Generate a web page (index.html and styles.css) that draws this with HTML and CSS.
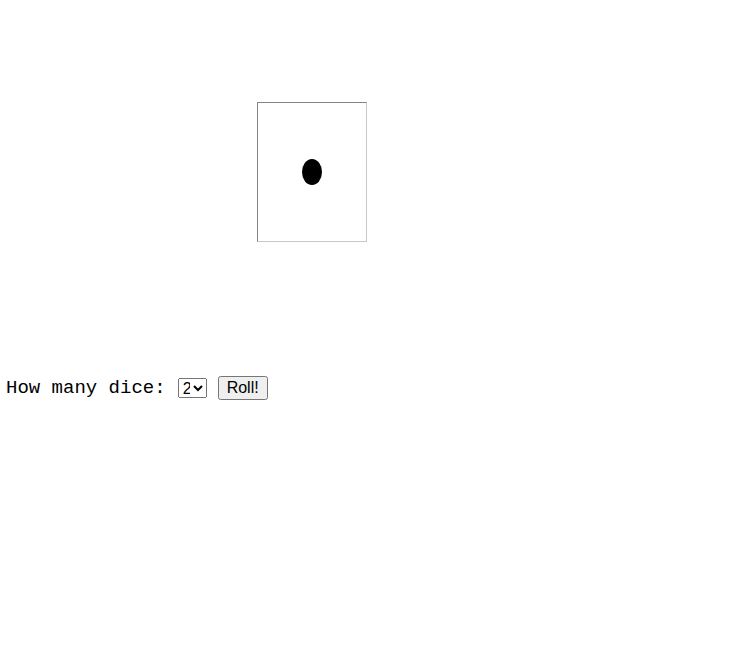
FILE: index.html
```html
<!DOCTYPE html>
<html>
<head>
<meta charset="utf-8">
<link rel="stylesheet" href="styles.css">
</head>
<body>
<div class="board">
  <div class="die">
    <span class="pip"></span>
  </div>
</div>
<form class="controls">
  <label class="label" for="count">How many dice:</label>
  <select id="count" class="select">
    <option>1</option>
    <option selected>2</option>
    <option>3</option>
  </select>
  <button type="button" class="roll">Roll!</button>
</form>
</body>
</html>
```

FILE: styles.css
```css
html, body {
  margin: 0;
  padding: 0;
  background: #fff;
}
.board {
  height: 376px;
  padding: 102px 0 0 257px;
  box-sizing: border-box;
}
.die {
  width: 110px;
  height: 140px;
  box-sizing: border-box;
  border: 1px solid;
  border-color: #858585 #c8c8c8 #c8c8c8 #858585;
  display: flex;
  align-items: center;
  justify-content: center;
  background: #fff;
}
.pip {
  width: 20px;
  height: 26px;
  border-radius: 50%;
  background: #000;
}
.controls {
  display: flex;
  align-items: center;
  margin: 0;
  padding-left: 6px;
  height: 24px;
}
.label {
  font-family: "Liberation Mono", monospace;
  font-size: 19px;
  color: #000;
  margin-right: 12px;
}
.select {
  font-family: "Liberation Sans", Arial, sans-serif;
  font-size: 16px;
  height: 20px;
  width: 29px;
  margin: 0 11px 0 0;
  padding: 0;
}
.roll {
  font-family: "Liberation Sans", Arial, sans-serif;
  font-size: 16px;
  height: 24px;
  width: 50px;
  padding: 0;
  margin: 0;
}
```
